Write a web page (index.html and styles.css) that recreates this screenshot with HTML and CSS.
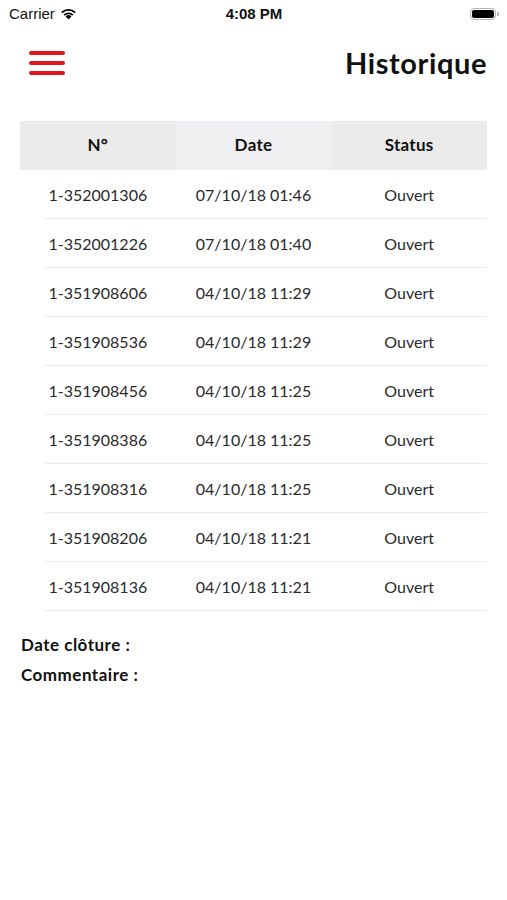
FILE: index.html
```html
<!DOCTYPE html>
<html lang="fr">

<head>
  <meta charset="UTF-8">
  <meta name="viewport" content="width=device-width, initial-scale=1.0">
  <title>Historique</title>
  <link rel="stylesheet" href="styles.css">
</head>

<body>
  <div class="status-bar">
    <div class="carrier">
      Carrier
      <svg class="wifi" width="17" height="12" viewBox="0 0 17 12">
        <path d="M8.5 11.5 L5.6 8.4 A4.2 4.2 0 0 1 11.4 8.4 Z" fill="#000"/>
        <path d="M3.6 6.4 A7 7 0 0 1 13.4 6.4 L12.1 7.8 A5.2 5.2 0 0 0 4.9 7.8 Z" fill="#000"/>
        <path d="M1.2 3.9 A10.6 10.6 0 0 1 15.8 3.9 L14.5 5.2 A8.8 8.8 0 0 0 2.5 5.2 Z" fill="#000"/>
      </svg>
    </div>
    <div class="time">4:08 PM</div>
    <div class="battery">
      <span class="battery-body"><span class="battery-fill"></span></span>
      <span class="battery-tip"></span>
    </div>
  </div>

  <div class="nav-bar">
    <svg class="menu-icon" width="36" height="26" viewBox="0 0 36 26">
      <line x1="2" y1="3" x2="34" y2="3" stroke="#e3161f" stroke-width="4" stroke-linecap="round"/>
      <line x1="2" y1="13" x2="34" y2="13" stroke="#e3161f" stroke-width="4" stroke-linecap="round"/>
      <line x1="2" y1="23" x2="34" y2="23" stroke="#e3161f" stroke-width="4" stroke-linecap="round"/>
    </svg>
    <h1 class="title">Historique</h1>
  </div>

  <div class="history-table">
    <div class="table-head">
      <div class="head-cell">N°</div>
      <div class="head-cell mid">Date</div>
      <div class="head-cell">Status</div>
    </div>
    <div id="rows"></div>
  </div>

  <div class="details">
    <p>Date clôture :</p>
    <p>Commentaire :</p>
  </div>

  <script>
    const tickets = [
      { num: "1-352001306", date: "07/10/18 01:46", status: "Ouvert" },
      { num: "1-352001226", date: "07/10/18 01:40", status: "Ouvert" },
      { num: "1-351908606", date: "04/10/18 11:29", status: "Ouvert" },
      { num: "1-351908536", date: "04/10/18 11:29", status: "Ouvert" },
      { num: "1-351908456", date: "04/10/18 11:25", status: "Ouvert" },
      { num: "1-351908386", date: "04/10/18 11:25", status: "Ouvert" },
      { num: "1-351908316", date: "04/10/18 11:25", status: "Ouvert" },
      { num: "1-351908206", date: "04/10/18 11:21", status: "Ouvert" },
      { num: "1-351908136", date: "04/10/18 11:21", status: "Ouvert" }
    ];

    document.getElementById("rows").innerHTML = tickets.map(t => `
      <div class="table-row">
        <div class="cell">${t.num}</div>
        <div class="cell">${t.date}</div>
        <div class="cell">${t.status}</div>
      </div>
    `).join("");
  </script>
</body>

</html>
```

FILE: styles.css
```css
body {
  margin: 0;
  background: #fff;
  font-family: "Lato", "Noto Sans", sans-serif;
  color: #111;
}

.status-bar {
  height: 27px;
  display: grid;
  grid-template-columns: 1fr auto 1fr;
  align-items: center;
  padding: 0 8px 0 9px;
  font-family: "Liberation Sans", sans-serif;
  font-size: 15px;
}

.carrier {
  display: flex;
  align-items: center;
  gap: 5px;
}

.time {
  font-weight: bold;
}

.battery {
  justify-self: end;
  display: flex;
  align-items: center;
}

.battery-body {
  width: 26px;
  height: 12px;
  border: 1px solid #b5b5b5;
  border-radius: 4px;
  padding: 1px;
  box-sizing: border-box;
  display: flex;
}

.battery-fill {
  flex: 1;
  background: #000;
  border-radius: 2px;
}

.battery-tip {
  width: 2px;
  height: 4px;
  background: #b5b5b5;
  border-radius: 0 1px 1px 0;
  margin-left: 1px;
}

.nav-bar {
  display: flex;
  justify-content: space-between;
  align-items: center;
  padding: 10px 20px 0 29px;
  height: 61px;
  box-sizing: border-box;
}

.title {
  margin: 0;
  font-size: 29px;
  font-weight: 700;
  letter-spacing: 0.6px;
}

.history-table {
  margin: 33px 20px 0 20px;
}

.table-head {
  display: grid;
  grid-template-columns: repeat(3, 1fr);
  height: 49px;
}

.head-cell {
  display: flex;
  align-items: center;
  justify-content: center;
  padding-bottom: 2px;
  background: #ebebeb;
  font-size: 17px;
  font-weight: 700;
  letter-spacing: 0.3px;
}

.head-cell.mid {
  background: #efeff1;
}

/* separator line is inset 25px on the left */
.table-row {
  display: grid;
  grid-template-columns: repeat(3, 1fr);
  height: 49px;
  background: linear-gradient(#ececec, #ececec) no-repeat 25px 100% / calc(100% - 25px) 1px;
}

.table-row .cell {
  display: flex;
  align-items: center;
  justify-content: center;
  font-size: 16px;
  color: #2a2a2a;
}

.details {
  margin: 23px 21px 0;
}

.details p {
  margin: 0 0 9px;
  font-size: 17px;
  font-weight: 700;
  letter-spacing: 0.5px;
}
```
